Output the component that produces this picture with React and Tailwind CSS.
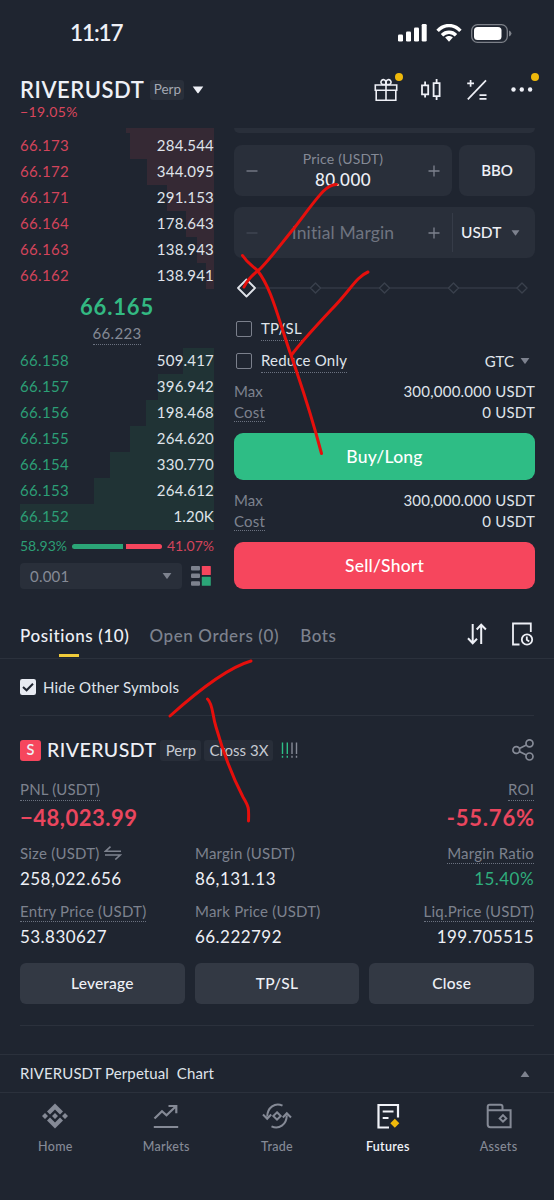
const ASKS=[
  {p:'66.173',q:'284.544',w:84},{p:'66.172',q:'344.095',w:67},{p:'66.171',q:'291.153',w:47},
  {p:'66.164',q:'178.643',w:28},{p:'66.163',q:'138.943',w:17},{p:'66.162',q:'138.941',w:8},
];
const BIDS=[
  {p:'66.158',q:'509.417',w:31},{p:'66.157',q:'396.942',w:56},{p:'66.156',q:'198.468',w:68},{p:'66.155',q:'264.620',w:84},
  {p:'66.154',q:'330.770',w:104},{p:'66.153',q:'264.612',w:120},{p:'66.152',q:'1.20K',w:194},
];
const DOTTED='border-b border-dotted border-[#6b7280]';

function Caret({className='w-[10px] h-[6px] text-[#7d828e]',up=false}){
  return <svg viewBox="0 0 10 6" className={className} fill="currentColor"><path d={up?'M0.6 6H9.4L5.5 0.5Q5 0 4.5 0.5Z':'M0.6 0H9.4L5.5 5.5Q5 6 4.5 5.5Z'}/></svg>;
}

function StatusBar(){
  return(
    <div className="h-[66px] shrink-0 flex items-center justify-between pl-[70px] pr-[42px]">
      <span className="text-[22.5px] font-semibold leading-none tracking-[-1.1px]">11:17</span>
      <div className="flex items-center text-white">
        <svg viewBox="0 0 29 18" className="w-[29px] h-[18px]" fill="currentColor">
          <rect x="0" y="10.5" width="5" height="7" rx="1.3"/><rect x="8" y="7.5" width="5" height="10" rx="1.3"/>
          <rect x="16" y="3.5" width="5" height="14" rx="1.3"/><rect x="23.7" y="0" width="5" height="17.5" rx="1.3"/>
        </svg>
        <svg viewBox="0 0 26 18" className="w-[26px] h-[18px] ml-[9px]" fill="none" stroke="currentColor" strokeWidth="3.4">
          <path d="M1.6 6.8C8-0.2 18-0.2 24.4 6.8"/><path d="M6 11.2C10 7.2 16 7.2 20 11.2"/><path d="M9.2 13.6C11.2 11.6 14.8 11.6 16.8 13.6L13 17.8Z" fill="currentColor" stroke="none"/>
        </svg>
        <svg viewBox="0 0 41 19" className="w-[41px] h-[19px] ml-[9px]">
          <rect x="0.7" y="0.7" width="35.6" height="17.6" rx="5.8" fill="none" stroke="#7c8088" strokeWidth="1.3"/>
          <rect x="3" y="3" width="27.5" height="13" rx="3.5" fill="#fff"/><path d="M38 6.5Q40.5 7.5 40.5 9.5T38 12.5Z" fill="#7c8088"/>
        </svg>
      </div>
    </div>
  );
}

function Header(){
  return(
    <header className="h-[62px] shrink-0 flex justify-between pt-3 pl-[20px] pr-[20px]">
      <div>
        <div className="h-6 flex items-center">
          <h1 className="text-[22px] font-semibold leading-none tracking-[0.55px]">RIVERUSDT</h1>
          <span className="ml-[6px] w-[34px] h-5 rounded-[3px] bg-[#292f3a] text-[#a3a8b3] text-[13.5px] leading-none flex items-center justify-center">Perp</span>
          <Caret className="w-[12px] h-[8px] ml-[8px] text-[#eef0f6]"/>
        </div>
        <div className="h-5 flex items-center text-[14px] leading-none tracking-[0.4px] text-[#d9455c]">−19.05%</div>
      </div>
      <div className="h-6 flex items-center gap-[21.4px]">
        <div className="relative">
          <svg viewBox="0 0 24 24" className="size-6" fill="none" stroke="currentColor" strokeWidth="1.6">
            <path d="M1.3 7H22.7V12.2H1.3Z"/><path d="M2.2 12.2V22.2H21.8V12.2"/><path d="M12 7V22"/><path d="M11.8 6.5H8.5A2.5 2.5 0 1 1 11.8 3.4ZM12.2 6.5H15.5A2.5 2.5 0 1 0 12.2 3.4Z"/>
          </svg>
          <i className="absolute size-[8px] rounded-full bg-[#efb90b] left-[21px] -top-[5px]"/>
        </div>
        <svg viewBox="0 0 24 24" className="size-6" fill="none" stroke="currentColor" strokeWidth="1.8">
          <path d="M3 7.3H9.2V16.3H3Z"/><path d="M6.1 3.5V7M6.1 16.5V19.5"/><path d="M14.6 5.2H20.6V18.2H14.6Z"/><path d="M17.6 1V5M17.6 18.5V22"/>
        </svg>
        <svg viewBox="0 0 24 24" className="size-6" fill="none" stroke="currentColor" strokeWidth="1.7">
          <path d="M2.8 21.3L21 2.3"/><path d="M2.2 5.3H9M5.6 2V8.7"/><path d="M14.5 17.2H21.5M14.5 20.8H21.5"/>
        </svg>
        <div className="relative">
          <svg viewBox="0 0 24 24" className="size-6" fill="currentColor"><circle cx="3.5" cy="11.5" r="2.2"/><circle cx="11.8" cy="11.5" r="2.2"/><circle cx="20.1" cy="11.5" r="2.2"/></svg>
          <i className="absolute size-[8px] rounded-full bg-[#efb90b] left-[21px] -top-[5px]"/>
        </div>
      </div>
    </header>
  );
}

function BookRow({row,bid}){
  const bg=bid?'#203335':'#352934';
  return(
    <div className="h-[26px] pb-[2px] flex items-center justify-between text-[15px] leading-none"
      style={{background:`linear-gradient(to left, ${bg} ${row.w}px, transparent ${row.w}px)`}}>
      <span className={`tracking-[0.35px] ${bid?'text-[#2c9f76]':'text-[#d3445b]'}`}>{row.p}</span>
      <span className="tracking-[0.2px] text-[#dfe3ea]">{row.q}</span>
    </div>
  );
}

function OrderBook(){
  return(
    <div className="w-[194px] shrink-0">
      <div className="h-[5px] ml-[106px] bg-[#352934]"/>
      {ASKS.map(r=><BookRow key={r.p} row={r}/>)}
      <div className="h-[59px] pt-[6px] flex flex-col items-center">
        <div className="h-[24px] flex items-center text-[22px] font-bold leading-none tracking-[0.85px] text-[#33b982]">66.165</div>
        <div className={`mt-[4px] h-[22px] flex items-center text-[15px] leading-none tracking-[0.3px] text-[#858a96] ${DOTTED}`}>66.223</div>
      </div>
      {BIDS.map(r=><BookRow key={r.p} row={r} bid/>)}
      <div className="h-[34px] flex items-center justify-between text-[14px] leading-none">
        <span className="pb-[2px] text-[#2c9f76]">58.93%</span>
        <div className="flex gap-[3px] w-[90px] mb-px"><i className="h-[5px] w-[51px] rounded-l-full bg-[#2ba577]"/><i className="h-[5px] flex-1 rounded-r-full bg-[#f6465d]"/></div>
        <span className="pb-[2px] text-[#d3445b]">41.07%</span>
      </div>
      <div className="h-[26px] -mt-px flex items-center">
        <div className="w-[162px] h-full rounded-[4px] bg-[#292f3a] flex items-center justify-between pl-[10px] pr-[10px] text-[15px] leading-none tracking-[0.2px] text-[#858a96]">0.001<Caret/></div>
        <svg viewBox="0 0 20 20" className="w-[20px] h-[20px] ml-[9px]">
          <g fill="#7d828e"><rect width="9" height="4.5" rx="1"/><rect y="7.6" width="9" height="4.5" rx="1"/><rect y="15.2" width="9" height="4.5" rx="1"/></g>
          <rect x="10.8" width="9" height="9" rx=".6" fill="#f6465d"/><rect x="10.8" y="10.8" width="9" height="9" rx=".6" fill="#2ba577"/>
        </svg>
      </div>
    </div>
  );
}

function Sign({plus,dim}){
  return <svg viewBox="0 0 12 12" className={`size-3 ${dim?'text-[#434955]':'text-[#7d828e]'}`} stroke="currentColor" strokeWidth="1.3"><path d={plus?'M0.5 6H11.5M6 0.5V11.5':'M0.5 6H11.5'}/></svg>;
}

function CheckRow({label,children}){
  return(
    <div className="h-8 flex items-center">
      <i className="size-4 ml-[2px] rounded-[2px] border-[1.5px] border-[#7b808c]"/>
      <span className={`ml-[9px] h-[23px] flex items-center text-[15px] leading-none tracking-[0.2px] text-[#dfe3ea] ${DOTTED}`}>{label}</span>
      {children}
    </div>
  );
}

function Limits(){
  return(
    <div className="text-[15px] leading-none">
      <div className="h-[21px] pb-[2px] flex items-center justify-between"><span className="text-[#7d828e]">Max</span><span className="tracking-[0.22px] text-[#dfe3ea]">300,000.000 USDT</span></div>
      <div className="h-[20px] flex items-center justify-between"><span className={`h-[18px] flex items-center text-[#7d828e] tracking-[0.2px] ${DOTTED}`}>Cost</span><span className="pb-px tracking-[0.22px] text-[#dfe3ea]">0 USDT</span></div>
    </div>
  );
}

function OrderForm(){
  return(
    <div className="w-[301px] ml-[20px]">
      <div className="h-[5px] rounded-b-[5px] bg-[#292f3a]"/>
      <div className="mt-[12px] h-[51px] flex gap-[7px]">
        <div className="w-[218px] rounded-[8px] bg-[#292f3a] flex items-center justify-between px-[12px]">
          <Sign/>
          <div className="text-center pb-[3px]">
            <div className="h-[20px] flex items-center justify-center text-[14px] leading-none tracking-[0.2px] text-[#858a96]">Price (USDT)</div>
            <div className="h-[20px] flex items-center justify-center text-[17px] font-medium leading-none tracking-[0.45px]">80.000</div>
          </div>
          <Sign plus/>
        </div>
        <div className="flex-1 rounded-[8px] bg-[#292f3a] flex items-center justify-center text-[15px] font-semibold leading-none">BBO</div>
      </div>
      <div className="mt-[11px] h-[51px] rounded-[8px] bg-[#292f3a] flex items-center">
        <div className="w-[218px] flex items-center justify-between px-[12px]">
          <Sign dim/><span className="text-[17.5px] leading-none tracking-[0.15px] text-[#6f7480]">Initial Margin</span><Sign plus/>
        </div>
        <i className="w-px h-[39px] bg-[#363c48]"/>
        <span className="ml-[8px] text-[15.5px] font-medium leading-none">USDT</span><Caret className="w-[9px] h-[6px] ml-[10px] text-[#7d828e]"/>
      </div>
      <svg viewBox="0 0 301 55" className="block w-[301px] h-[55px]" fill="none">
        <path d="M20 30H283" stroke="#333945" strokeWidth="1.6"/>
        {[81.5,150.5,219.5,288].map(x=><path key={x} d={`M${x-5} 30L${x} 25L${x+5} 30L${x} 35Z`} fill="#1f2530" stroke="#3a404c" strokeWidth="1.4" strokeLinejoin="round"/>)}
        <path d="M4 30L12.5 21.5L21 30L12.5 38.5Z" fill="#1f2530" stroke="#dfe2e8" strokeWidth="1.8" strokeLinejoin="round"/>
      </svg>
      <CheckRow label="TP/SL"/>
      <CheckRow label="Reduce Only"><span className="ml-auto mr-[5px] flex items-center gap-[6px] text-[15px] leading-none text-[#dfe3ea]">GTC<Caret/></span></CheckRow>
      <div className="mt-[5px]"><Limits/></div>
      <button className="mt-[10px] w-full h-[47px] rounded-[9px] bg-[#2ebd85] text-[17.5px] font-medium leading-none tracking-[0.2px] text-white">Buy/Long</button>
      <div className="mt-[11px]"><Limits/></div>
      <button className="mt-[10px] w-full h-[47px] rounded-[9px] bg-[#f6465d] text-[17.5px] font-medium leading-none tracking-[0.2px] text-white">Sell/Short</button>
    </div>
  );
}

function Tabs(){
  return(
    <div className="mt-[22px] h-[48px] shrink-0 flex pl-[20px] pr-[20px] border-b border-[#2b313c] text-[17px] font-medium leading-none tracking-[0.6px]">
      <div className="relative h-[48px] flex items-center text-[#eef0f6]">Positions (10)<i className="absolute bottom-[2px] left-[39px] w-[20px] h-[3px] bg-[#f0cb3a]"/></div>
      <span className="ml-[20px] h-[48px] flex items-center text-[#7d828e]">Open Orders (0)</span>
      <span className="ml-[21px] h-[48px] flex items-center text-[#7d828e]">Bots</span>
      <div className="ml-auto h-[46px] flex items-center gap-[24px]">
        <svg viewBox="0 0 20 22" className="w-[20px] h-[22px]" fill="none" stroke="currentColor" strokeWidth="2"><path d="M5.7 1V20M1 15.3L5.7 20.2L10 15.8M14.2 21V2M9.7 6.5L14.2 1.8L18.9 6.5"/></svg>
        <svg viewBox="0 0 23 24" className="w-[23px] h-[24px]" fill="none" stroke="currentColor" strokeWidth="1.8"><path d="M8.5 22.5H2V1.5H19.8V10"/><circle cx="16" cy="17.5" r="5.2"/><path d="M15.8 14.5V17.8L18.2 19.4"/></svg>
      </div>
    </div>
  );
}

function Stat({label,value,right,dotted,green,icon}){
  return(
    <div className={`flex flex-col ${right?'items-end':'items-start'}`}>
      <div className={`h-[21px] flex items-center text-[15px] leading-none tracking-[0.22px] text-[#7d828e] ${dotted?DOTTED:'border-b border-transparent'}`}>
        {label}
        {icon&&<svg viewBox="0 0 18 14" className="w-[18px] h-[14px] ml-[5px]" fill="none" stroke="currentColor" strokeWidth="1.6"><path d="M6.5 0.6L1.5 5.2H17M1 9H16.2L11.3 13.5"/></svg>}
      </div>
      <div className={`h-[28px] flex items-center text-[17px] leading-none tracking-[0.45px] ${green?'text-[#2fae7d]':'text-[#eef0f6]'}`}>{value}</div>
    </div>
  );
}

function Position(){
  return(
    <section className="mx-[20px] border-y border-[#2b313c] h-[311px] shrink-0">
      <div className="mt-[22px] h-6 flex items-center">
        <span className="size-[21px] rounded-[3px] bg-[#f6465d] flex items-center justify-center text-[14.5px] font-semibold leading-none">S</span>
        <h2 className="ml-[6px] text-[19.5px] font-medium leading-none tracking-[0.45px]">RIVERUSDT</h2>
        <span className="ml-[4px] w-[41px] h-[21px] rounded-[3px] bg-[#282e39] flex items-center justify-center text-[15px] leading-none text-[#c6cad2]">Perp</span>
        <span className="ml-[3px] w-[69px] h-[21px] rounded-[3px] bg-[#282e39] flex items-center justify-center text-[15px] leading-none text-[#c6cad2]">Cross 3X</span>
        <svg viewBox="0 0 17 16" className="w-[17px] h-[16px] ml-[8px]" strokeWidth="1.4" strokeDasharray="11.5 1.8 2 9">
          <path d="M1.5 0.5V16M6.3 0.5V16" stroke="#2ebd85"/><path d="M11 0.5V16M15.5 0.5V16" stroke="#858a96"/>
        </svg>
        <svg viewBox="0 0 22 22" className="w-[22px] h-[22px] ml-auto" fill="none" stroke="#858a96" strokeWidth="1.7"><circle cx="4.3" cy="11" r="3.4"/><circle cx="17.5" cy="4.3" r="3.5"/><circle cx="17.5" cy="17.5" r="3.5"/><path d="M7.3 9.5L14.4 5.9M7.3 12.5L14.4 15.9"/></svg>
      </div>
      <div className="mt-[17px] flex justify-between text-[15px] leading-none tracking-[0.15px] text-[#7d828e]">
        <span className={`h-[22px] flex items-center ${DOTTED}`}>PNL (USDT)</span><span className={`h-[22px] flex items-center ${DOTTED}`}>ROI</span>
      </div>
      <div className="h-[32px] pt-[2px] flex items-center justify-between text-[22px] font-bold leading-none text-[#ea465e]"><span className="tracking-[0.5px]">−48,023.99</span><span className="tracking-[0.8px] -mr-[0.8px]">-55.76%</span></div>
      <div className="mt-[10px] flex justify-between">
        <div className="w-[175px] flex flex-col gap-[9px]"><Stat label="Size (USDT)" value="258,022.656" icon/><Stat label="Entry Price (USDT)" value="53.830627" dotted/></div>
        <div className="flex-1 flex flex-col gap-[9px]"><Stat label="Margin (USDT)" value="86,131.13"/><Stat label="Mark Price (USDT)" value="66.222792"/></div>
        <div className="flex flex-col gap-[9px]"><Stat label="Margin Ratio" value="15.40%" right dotted green/><Stat label="Liq.Price (USDT)" value="199.705515" right dotted/></div>
      </div>
      <div className="mt-[13px] grid grid-cols-3 gap-[10px] text-[15.5px] font-medium leading-none tracking-[0.2px]">
        {['Leverage','TP/SL','Close'].map(t=><button key={t} className="h-[41px] rounded-[6px] bg-[#333944] text-[#eef0f6]">{t}</button>)}
      </div>
    </section>
  );
}

const NAV=[
  {t:'Home',i:<g fill="currentColor"><path d="M13 0.5L21 8.5L18 11.5L13 6.5L8 11.5L5 8.5Z"/><path d="M13 25.5L21 17.5L18 14.5L13 19.5L8 14.5L5 17.5Z"/><path d="M13 10L16 13L13 16L10 13ZM3 10L6 13L3 16L0 13ZM23 10L26 13L23 16L20 13Z"/></g>},
  {t:'Markets',i:<path d="M1.5 15.5L9 8.2L13.5 12.3L23 3.3M15.5 3H23.3V10.3M0.8 24H25.2" fill="none" stroke="currentColor" strokeWidth="2.2"/>},
  {t:'Trade',i:<g fill="none" stroke="currentColor" strokeWidth="2"><path d="M18.5 2.6C11-1 3.4 4.5 3.2 13.5M-1 11.5L3.2 15.8L7.2 11.5"/><path d="M7.5 23.4C15 27 22.6 21.5 22.8 12.5M18.8 14.5L22.8 10.2L27 14.5"/><path d="M13 9.3L16.7 13L13 16.7L9.3 13Z"/></g>},
  {t:'Futures',on:true,i:<><path d="M14 24.5H3.5V2H23V14.5" fill="none" stroke="currentColor" strokeWidth="2.2"/><path d="M7.7 8.5H18.5M7.7 15H13.5" stroke="currentColor" strokeWidth="2"/><path d="M19.8 15.8L24.3 20.3L19.8 24.8L15.3 20.3Z" fill="#f0b90b"/></>},
  {t:'Assets',i:<g fill="none" stroke="currentColor" strokeWidth="2"><path d="M1.7 7.5V21.5Q1.7 24.2 4.4 24.2H24.6V7.2H1.7V3.8Q1.7 1.8 3.7 1.8H14.5Q16.5 1.8 16.5 3.8V7"/><path d="M17 12.1L20.3 15.4L17 18.7L13.7 15.4Z"/></g>},
];

function BottomNav(){
  return(
    <nav className="flex justify-between border-t border-[#2b313c] shrink-0">
      {NAV.map(n=>(
        <div key={n.t} className={`flex-1 flex flex-col items-center pt-[10px] ${n.on?'text-[#f1f3f8]':'text-[#858a96]'}`}>
          <svg viewBox="0 0 26 26" className="size-[26px] overflow-visible">{n.i}</svg>
          <span className={`mt-[8px] h-[20px] flex items-center text-[12.5px] leading-none tracking-[0.3px] ${n.on?'font-semibold':'font-medium'}`}>{n.t}</span>
        </div>))}
    </nav>
  );
}

// hand-drawn marks on top of the screen
function Marks(){
  return(
    <svg viewBox="0 0 554 1200" className="absolute inset-0 w-full h-full pointer-events-none" fill="none" stroke="#e60f0c" strokeWidth="3" strokeLinecap="round" strokeLinejoin="round">
      <path d="M336.5 184.5C326 184 318 197 295 227C281 244 270 259 260 269C252 275 247 280 244 287"/>
      <path d="M242.5 255.5C248 264 253 266 257 270C272 288 279 322 291.5 356.5C300 382 309 406 321.5 453.5"/>
      <path d="M368 272C356 277 350 291 331 310C316 326 302 341 291.5 355"/>
      <path d="M251 661C230 667 200 689 170 716"/>
      <path d="M207.5 699C213 704 212 714 216 727C222 748 230 772 243 797C249 807 249 808 248.5 821"/>
    </svg>
  );
}

export default function App(){
  return(
    <main className="relative w-full h-[1200px] overflow-hidden bg-[#1f2530] text-[#eef0f6] font-['Lato',sans-serif] [font-variant-ligatures:none] flex flex-col">
      <StatusBar/>
      <Header/>
      <div className="flex pl-[20px] h-[461px] shrink-0"><OrderBook/><OrderForm/></div>
      <Tabs/>
      <div className="h-[56px] shrink-0 flex items-center pl-[20px] text-[15px] leading-none text-[#dfe3ea]">
        <svg viewBox="0 0 16 16" className="size-4"><rect width="16" height="16" rx="2.2" fill="#e8ebf2"/><path d="M3 8L6.6 11.3L13 4.8" fill="none" stroke="#1f2530" strokeWidth="2"/></svg>
        <span className="ml-[7px] tracking-[0.2px]">Hide Other Symbols</span>
      </div>
      <Position/>
      <div className="mt-[28px] h-[38px] shrink-0 flex items-center justify-between pl-[20px] pr-[24px] border-t border-[#2b313c] text-[15px] leading-none tracking-[0.1px] text-[#dfe3ea]">
        <span className="whitespace-pre">RIVERUSDT Perpetual  Chart</span><Caret up/>
      </div>
      <BottomNav/>
      <Marks/>
    </main>
  );
}
